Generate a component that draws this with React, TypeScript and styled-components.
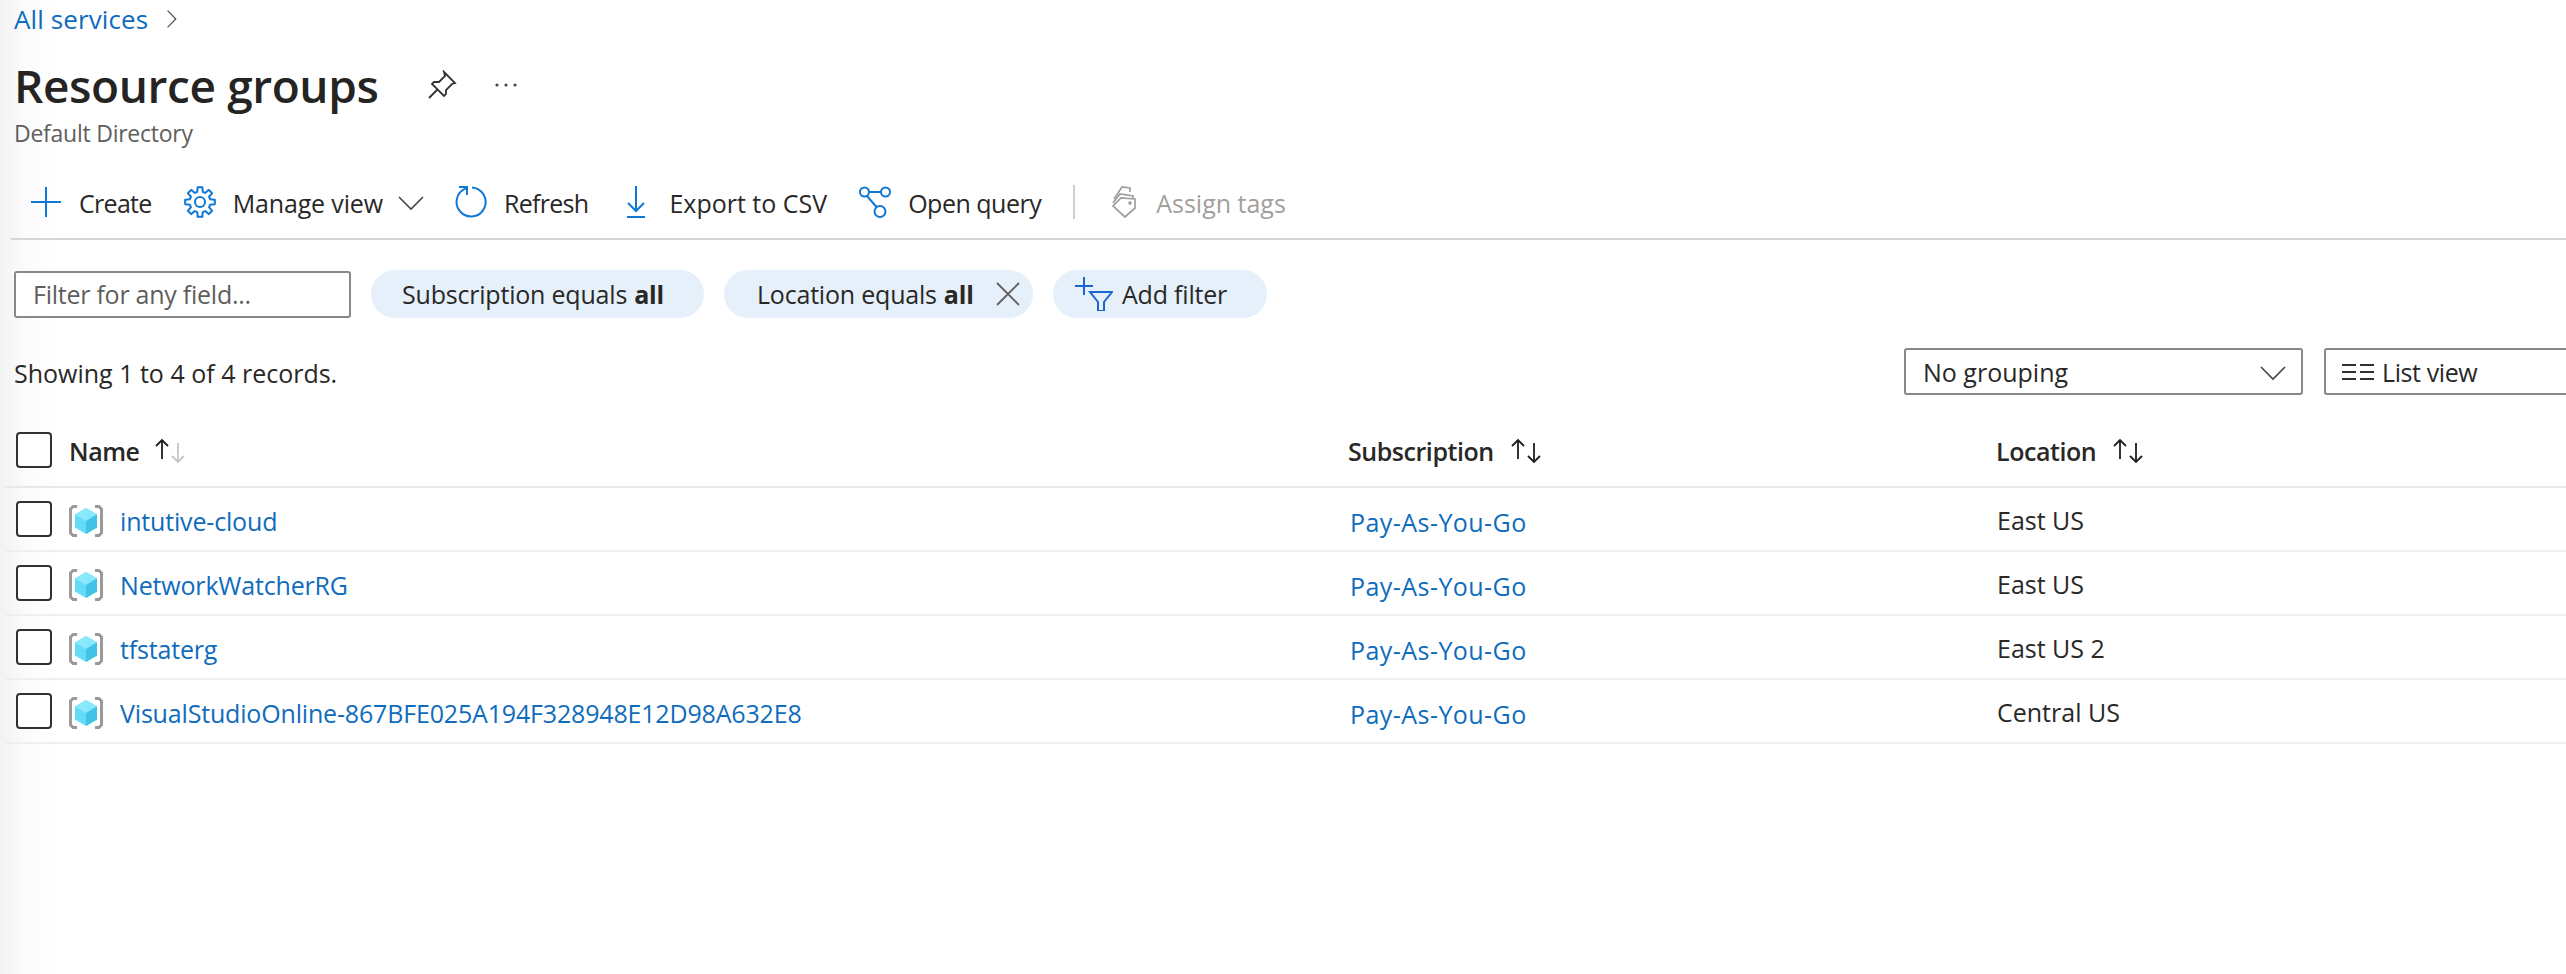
import styled, { createGlobalStyle } from "styled-components";
import { ReactNode } from "react";

const GlobalStyle = createGlobalStyle`
  html, body {
    margin: 0;
    padding: 0;
    background: #fff;
    overflow: hidden;
  }
  * {
    box-sizing: border-box;
  }
`;

const Page = styled.div`
  width: 2566px;
  height: 974px;
  overflow: hidden;
  font-family: "Open Sans", "Noto Sans", sans-serif;
  font-size: 25px;
  color: #292827;
  background: linear-gradient(90deg, #f2f2f2 0, #fbfbfb 24px, #fff 56px);
`;
const Breadcrumb = styled.nav`
  display: flex;
  align-items: center;
  gap: 14px;
  height: 38px;
  padding-left: 14px;
`;
const BlueLink = styled.a`
  color: #0f6cbd;
  letter-spacing: -0.17px;
  white-space: nowrap;
`;
const CrumbLink = styled(BlueLink)`
  font-size: 26px;
  letter-spacing: 0.1px;
`;
const NameLink = styled(BlueLink)`
  padding-top: 1px;
`;
const SubscriptionLink = styled(BlueLink)`
  letter-spacing: 0.45px;
`;
const TitleRow = styled.div`
  display: flex;
  align-items: center;
  height: 58px;
  margin-top: 18px;
  padding-left: 14px;
`;
const Title = styled.h1`
  margin: 0;
  font-size: 46px;
  font-weight: 600;
  letter-spacing: -0.4px;
  color: #252423;
`;
const TitleIcon = styled.span<{ $left: number }>`
  display: flex;
  margin-left: ${(p) => p.$left}px;
  color: #323130;
`;
const Subtitle = styled.div`
  height: 32px;
  margin-top: 3px;
  padding-left: 14px;
  font-size: 23px;
  line-height: 32px;
  color: #605e5c;
  letter-spacing: -0.25px;
`;
const Toolbar = styled.div`
  display: flex;
  align-items: center;
  gap: 32px;
  height: 74px;
  margin-top: 17px;
  margin-left: 11px;
  padding-left: 19px;
  border-bottom: 2px solid #d6d6d6;
`;
const ToolButton = styled.div<{ $disabled?: boolean; $spacing?: number }>`
  display: flex;
  align-items: center;
  gap: 17px;
  white-space: nowrap;
  letter-spacing: ${(p) => p.$spacing ?? 0}px;
  color: ${(p) => (p.$disabled ? "#a19f9d" : "#292827")};
`;
const ToolLabel = styled.span`
  padding-top: 2px;
`;
const ToolChevron = styled.span`
  display: flex;
  margin-left: -2px;
  margin-right: -1px;
`;
const Separator = styled.div`
  width: 2px;
  height: 34px;
  background: #d2d0ce;
`;
const FilterBar = styled.div`
  display: flex;
  align-items: center;
  gap: 20px;
  margin-top: 30px;
  padding-left: 14px;
`;
const FilterInput = styled.input`
  width: 337px;
  height: 47px;
  padding: 0 17px;
  border: 2px solid #8a8886;
  border-radius: 3px;
  outline: none;
  background: #fff;
  font-family: inherit;
  font-size: 25px;
  letter-spacing: -0.25px;
  &::placeholder {
    color: #605e5c;
    opacity: 1;
  }
`;
const Pill = styled.div<{ $width: number; $left: number }>`
  display: flex;
  align-items: center;
  width: ${(p) => p.$width}px;
  height: 48px;
  padding-left: ${(p) => p.$left}px;
  border-radius: 24px;
  background: #e5f0fa;
  white-space: nowrap;
  letter-spacing: -0.2px;
  b {
    margin-left: 7px;
    font-weight: 700;
  }
  svg {
    flex: none;
  }
`;
const CloseIcon = styled.svg`
  margin-left: 22px;
`;
const AddFilterIcon = styled.svg`
  margin-right: 9px;
`;
const SummaryBar = styled.div`
  display: flex;
  align-items: center;
  justify-content: space-between;
  height: 47px;
  margin-top: 30px;
  padding-left: 14px;
`;
const Summary = styled.div`
  padding-top: 2px;
`;
const Controls = styled.div`
  display: flex;
  gap: 21px;
  margin-right: -158px;
`;
const SelectBox = styled.div<{ $width: number; $left?: number }>`
  display: flex;
  align-items: center;
  justify-content: space-between;
  width: ${(p) => p.$width}px;
  height: 47px;
  padding: 0 15px 0 ${(p) => p.$left ?? 17}px;
  border: 2px solid #8a8886;
  border-radius: 3px;
  background: #fff;
`;
const ListViewLabel = styled.span`
  display: flex;
  align-items: center;
  gap: 8px;
  letter-spacing: -0.4px;
`;
const TableWrap = styled.div`
  margin-top: 19px;
  margin-left: 5px;
`;
const Row = styled.div<{ $head?: boolean }>`
  display: grid;
  grid-template-columns: 52px 1280px 647px 1fr;
  align-items: center;
  height: ${(p) => (p.$head ? 74 : 64)}px;
  padding-left: 11px;
  border-bottom: 2px solid ${(p) => (p.$head ? "#e8e8e8" : "#efefef")};
`;
const Box = styled.span`
  display: block;
  width: 36px;
  height: 36px;
  border: 2px solid #323130;
  border-radius: 4px;
  background: #fff;
`;
const HeadCell = styled.div<{ $shift?: number; $gap?: number }>`
  display: flex;
  align-items: center;
  gap: ${(p) => p.$gap ?? 15}px;
  padding-top: 2px;
  font-weight: 600;
  letter-spacing: -0.45px;
  padding-left: ${(p) => p.$shift ?? 0}px;
`;
const NameCell = styled.div`
  display: flex;
  align-items: center;
  gap: 17px;
  padding: 3px 0 0 1px;
`;
const Cell = styled.div<{ $pad: number }>`
  padding-top: ${(p) => p.$pad}px;
  padding-left: 2px;
  white-space: nowrap;
`;

const Chevron = ({ size = 26, dir = "down" }: { size?: number; dir?: "down" | "right" }) => (
  <svg width={size} height={size} viewBox="0 0 26 26" fill="none" stroke="#484644" strokeWidth="1.6">
    {dir === "down" ? <path d="M1 8l12 12L25 8" /> : <path d="M8 1l12 12L8 25" />}
  </svg>
);

const IconSlot = ({ children }: { children: ReactNode }) => (
  <svg width="32" height="32" viewBox="0 0 32 32" fill="none" stroke="#0f78d4" strokeWidth="2">
    {children}
  </svg>
);

// eight rounded teeth, the outline is worked out rather than typed by hand
const gearPath = () => {
  const point = (radius: number, deg: number) => {
    const rad = (deg * Math.PI) / 180;
    return `${(16 + radius * Math.cos(rad)).toFixed(2)} ${(16 + radius * Math.sin(rad)).toFixed(2)}`;
  };
  let d = "";
  for (let i = 0; i < 8; i++) {
    const mid = i * 45;
    d += `${i === 0 ? "M" : "L"}${point(10.5, mid - 15)}L${point(15, mid - 9)}L${point(15, mid + 9)}L${point(10.5, mid + 15)}`;
  }
  return d + "Z";
};

const SortArrows = ({ asc }: { asc?: boolean }) => (
  <svg width="34" height="26" viewBox="0 0 34 26" fill="none" strokeWidth="1.8">
    <path d="M9 21V2M3 8l6-6 6 6" stroke="#201f1e" />
    <path d="M25 5v19M19 18l6 6 6-6" stroke={asc ? "#c8c6c4" : "#201f1e"} />
  </svg>
);

const GroupIcon = () => (
  <svg width="34" height="32" viewBox="0 0 34 32" fill="none">
    <path d="M8 1.500H4L1.500 4v24L4 30.500h4" stroke="#9a9a9a" strokeWidth="3" />
    <path d="M26 1.500h4L32.500 4v24L30 30.500h-4" stroke="#9a9a9a" strokeWidth="3" />
    <path d="M17 3L6 9.500v13L17 29l11-6.500v-13z" fill="#62dcf8" />
    <path d="M17 3L6 9.500 17 16l11-6.500z" fill="#8ae8fc" />
    <path d="M17 16v13l11-6.500v-13z" fill="#42c2e4" />
  </svg>
);

const groups = [
  { name: "intutive-cloud", location: "East US" },
  { name: "NetworkWatcherRG", location: "East US" },
  { name: "tfstaterg", location: "East US 2" },
  { name: "VisualStudioOnline-867BFE025A194F328948E12D98A632E8", location: "Central US" },
];

export default function App() {
  return (
    <Page>
      <GlobalStyle />
      <Breadcrumb>
        <CrumbLink>All services</CrumbLink>
        <Chevron size={18} dir="right" />
      </Breadcrumb>
      <TitleRow>
        <Title>Resource groups</Title>
        <TitleIcon $left={49}>
          <svg width="30" height="30" viewBox="0 0 30 30" fill="none" stroke="#323130" strokeWidth="1.8">
            <path d="M2 28l9-9M17 2l11 11-3 1-6 6 0 4-2 2L5 14l2-2h5l6-6z" />
          </svg>
        </TitleIcon>
        <TitleIcon $left={37}>
          <svg width="24" height="6" viewBox="0 0 24 6" fill="#484644">
            <circle cx="3" cy="3" r="1.6" />
            <circle cx="12" cy="3" r="1.6" />
            <circle cx="21" cy="3" r="1.6" />
          </svg>
        </TitleIcon>
      </TitleRow>
      <Subtitle>Default Directory</Subtitle>
      <Toolbar>
        <ToolButton $spacing={-0.7}>
          <IconSlot>
            <path d="M16 1v30M1 16h30" />
          </IconSlot>
          <ToolLabel>Create</ToolLabel>
        </ToolButton>
        <ToolButton $spacing={-0.15}>
          <IconSlot>
            <circle cx="16" cy="16" r="5" />
            <path d={gearPath()} strokeLinejoin="round" />
          </IconSlot>
          <ToolLabel>Manage view</ToolLabel>
          <ToolChevron>
            <Chevron />
          </ToolChevron>
        </ToolButton>
        <ToolButton $spacing={-0.7}>
          <IconSlot>
            <path d="M17 1.500A14.500 14.500 0 1 1 11 2.400" />
            <path d="M4 1h8v8" />
          </IconSlot>
          <ToolLabel>Refresh</ToolLabel>
        </ToolButton>
        <ToolButton>
          <IconSlot>
            <path d="M16 0v25M8 17l8 8 8-8M7 31h18" />
          </IconSlot>
          <ToolLabel>Export to CSV</ToolLabel>
        </ToolButton>
        <ToolButton $spacing={-0.5}>
          <IconSlot>
            <circle cx="5.500" cy="6" r="4.500" />
            <circle cx="26.500" cy="6" r="4.500" />
            <circle cx="21" cy="25.500" r="5.500" />
            <path d="M10 6h12M8 10l9.500 11" />
          </IconSlot>
          <ToolLabel>Open query</ToolLabel>
        </ToolButton>
        <Separator />
        <ToolButton $disabled>
          <svg width="32" height="32" viewBox="0 0 32 32" fill="none" stroke="#a19f9d" strokeWidth="1.7">
            <path d="M7 13l8-12 8 1v4" />
            <path d="M6 17l7-9 13 2v3" />
            <path d="M18 31L6 20l8-8 14 1v9z" />
            <circle cx="23" cy="17" r="1" />
          </svg>
          <ToolLabel>Assign tags</ToolLabel>
        </ToolButton>
      </Toolbar>
      <FilterBar>
        <FilterInput placeholder="Filter for any field..." />
        <Pill $width={333} $left={31}>
          Subscription equals <b>all</b>
        </Pill>
        <Pill $width={309} $left={33}>
          Location equals <b>all</b>
          <CloseIcon width="24" height="24" viewBox="0 0 24 24" fill="none" stroke="#605e5c" strokeWidth="1.8">
            <path d="M1 1l22 22M23 1L1 23" />
          </CloseIcon>
        </Pill>
        <Pill $width={214} $left={22}>
          <AddFilterIcon width="38" height="34" viewBox="0 0 38 34" fill="none" stroke="#1a66d2" strokeWidth="2">
            <path d="M9 0v18M0 9h18M15 15h22l-8 10v9h-6v-9z" />
          </AddFilterIcon>
          Add filter
        </Pill>
      </FilterBar>
      <SummaryBar>
        <Summary>Showing 1 to 4 of 4 records.</Summary>
        <Controls>
          <SelectBox $width={399}>
            No grouping
            <Chevron />
          </SelectBox>
          <SelectBox $width={400} $left={16}>
            <ListViewLabel>
              <svg width="32" height="18" viewBox="0 0 32 18" fill="none" stroke="#323130" strokeWidth="2">
                <path d="M0 2h14M18 2h14M0 9h14M18 9h14M0 16h14M18 16h14" />
              </svg>
              List view
            </ListViewLabel>
          </SelectBox>
        </Controls>
      </SummaryBar>
      <TableWrap>
        <Row $head>
          <Box />
          <HeadCell $shift={1} $gap={13}>
            Name <SortArrows asc />
          </HeadCell>
          <HeadCell>
            Subscription <SortArrows />
          </HeadCell>
          <HeadCell $shift={1}>
            Location <SortArrows />
          </HeadCell>
        </Row>
        {groups.map((group) => (
          <Row key={group.name}>
            <Box />
            <NameCell>
              <GroupIcon />
              <NameLink>{group.name}</NameLink>
            </NameCell>
            <Cell $pad={5}>
              <SubscriptionLink>Pay-As-You-Go</SubscriptionLink>
            </Cell>
            <Cell $pad={1}>{group.location}</Cell>
          </Row>
        ))}
      </TableWrap>
    </Page>
  );
}
